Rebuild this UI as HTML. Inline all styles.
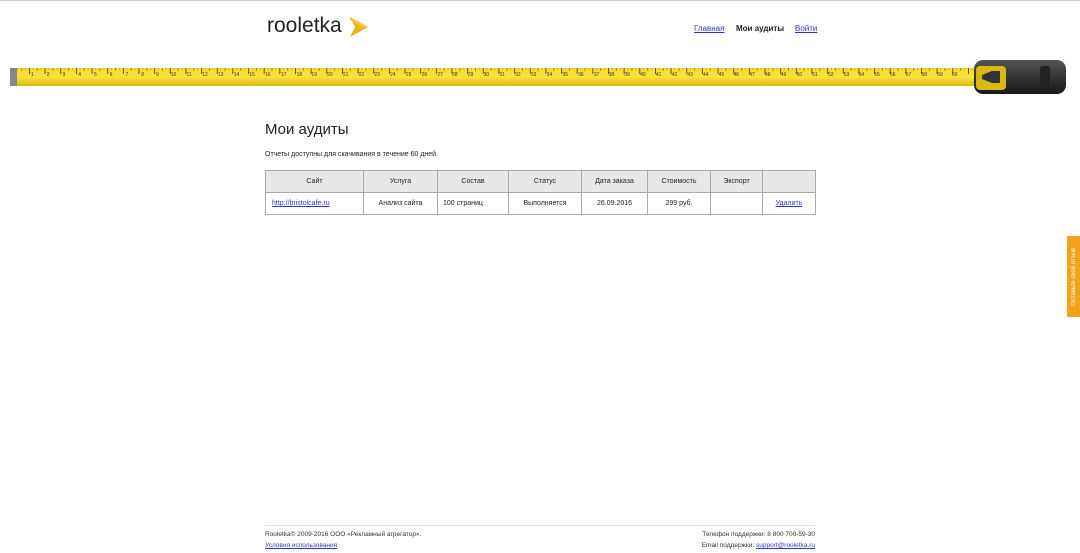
<!DOCTYPE html>
<html><head><meta charset="utf-8"><style>
body{margin:0;width:1080px;height:553px;background:#fff;font-family:"Liberation Sans",sans-serif;position:relative;overflow:hidden;color:#222}
.top{position:absolute;left:0;top:0;width:1080px;height:1px;background:#ccc}
.logo{position:absolute;left:267px;top:14px;font-size:21px;color:#222;letter-spacing:0}
.nav{position:absolute;top:24px;font-size:8px}
a{color:#33c;text-decoration:underline}
h1{position:absolute;left:265px;top:121px;margin:0;font-size:15px;font-weight:normal}
.note{position:absolute;left:265px;top:151px;font-size:7px}
table{position:absolute;left:265px;top:170px;width:551px;border-collapse:collapse;font-size:7px}
td,th{border:1px solid #aaa;text-align:center;font-weight:normal;height:21px;padding:0}
th{background:#e8e8e8}
.foot{position:absolute;left:265px;top:525px;width:550px;border-top:1px solid #ddd;font-size:6.5px;line-height:11px;padding-top:3px;color:#333}
.tab{position:absolute;left:1067px;top:236px;width:13px;height:81px;background:#f2a21b}
.tab span{position:absolute;left:50%;top:50%;transform:translate(-50%,-50%) rotate(-90deg);white-space:nowrap;font-size:6px;color:#fff}
</style></head><body>
<div class="top"></div>
<div class="logo">rooletka<svg width="22" height="22" viewBox="0 0 22 22" style="position:absolute;left:81px;top:2px"><path d="M2 1 L20 11 L2 21 L7 11 Z" fill="#f0b21a"/><path d="M2 1 L20 11 L14 11 L2 4Z" fill="#f7c93a"/></svg></div>
<div class="nav" style="left:694px"><a>Главная</a></div>
<div class="nav" style="left:736px;font-weight:bold">Мои аудиты</div>
<div class="nav" style="left:795px"><a>Войти</a></div>
<svg style="position:absolute;left:0;top:58px" width="1080" height="42">
<defs><linearGradient id="y" x1="0" y1="0" x2="0" y2="1"><stop offset="0" stop-color="#f5dc2c"/><stop offset=".5" stop-color="#f9e33a"/><stop offset="1" stop-color="#d9b812"/></linearGradient>
<pattern id="t" x="29" y="0" width="15.65" height="30" patternUnits="userSpaceOnUse"><rect x="0" y="10" width="0.8" height="6" fill="#333"/><rect x="8" y="10" width="0.6" height="3" fill="#555"/><rect x="4" y="10" width="0.4" height="2" fill="#777"/><rect x="12" y="10" width="0.4" height="2" fill="#777"/></pattern>
<linearGradient id="c" x1="0" y1="0" x2="0" y2="1"><stop offset="0" stop-color="#555"/><stop offset=".5" stop-color="#333"/><stop offset="1" stop-color="#1a1a1a"/></linearGradient></defs>
<rect x="10" y="10" width="970" height="18" fill="url(#y)"/>
<rect x="16" y="10" width="960" height="18" fill="url(#t)"/>
<rect x="10" y="10" width="7" height="18" fill="#888"/>
<g font-size="5" fill="#333" font-family="Liberation Sans" transform="translate(0.5,0) scale(0.984,1)">
<text x="31" y="18">1</text><text x="47" y="18">2</text><text x="63" y="18">3</text><text x="79" y="18">4</text><text x="95" y="18">5</text><text x="111" y="18">6</text><text x="127" y="18">7</text><text x="143" y="18">8</text><text x="158" y="18">9</text><text x="173" y="18">10</text><text x="189" y="18">11</text><text x="205" y="18">12</text><text x="221" y="18">13</text><text x="237" y="18">14</text><text x="253" y="18">15</text><text x="269" y="18">16</text><text x="285" y="18">17</text><text x="301" y="18">18</text><text x="316" y="18">19</text><text x="332" y="18">20</text><text x="348" y="18">21</text><text x="364" y="18">22</text><text x="380" y="18">23</text><text x="396" y="18">24</text><text x="412" y="18">25</text><text x="428" y="18">26</text><text x="444" y="18">27</text><text x="459" y="18">28</text><text x="475" y="18">29</text><text x="491" y="18">30</text><text x="507" y="18">31</text><text x="523" y="18">32</text><text x="539" y="18">33</text><text x="555" y="18">34</text><text x="571" y="18">35</text><text x="587" y="18">36</text><text x="603" y="18">37</text><text x="618" y="18">38</text><text x="634" y="18">39</text><text x="650" y="18">40</text><text x="666" y="18">41</text><text x="682" y="18">42</text><text x="698" y="18">43</text><text x="714" y="18">44</text><text x="730" y="18">45</text><text x="745" y="18">46</text><text x="761" y="18">47</text><text x="777" y="18">48</text><text x="793" y="18">49</text><text x="809" y="18">50</text><text x="825" y="18">51</text><text x="841" y="18">52</text><text x="857" y="18">53</text><text x="872" y="18">54</text><text x="888" y="18">55</text><text x="904" y="18">56</text><text x="920" y="18">57</text><text x="936" y="18">58</text><text x="952" y="18">59</text><text x="967" y="18">60</text></g>
<rect x="974" y="2" width="92" height="34" rx="9" fill="url(#c)"/>
<rect x="976" y="8" width="30" height="24" rx="4" fill="#d9b812"/>
<path d="M982 17 L992 13 L1000 13 L1000 25 L992 25 L982 21Z" fill="#333"/>
<rect x="1040" y="8" width="10" height="22" rx="3" fill="#222"/>
</svg>
<h1>Мои аудиты</h1>
<div class="note">Отчеты доступны для скачивания в течение 60 дней.</div>
<table><tr><th style="width:97px">Сайт</th><th style="width:73px">Услуга</th><th style="width:70px">Состав</th><th style="width:72px">Статус</th><th style="width:65px">Дата заказа</th><th style="width:62px">Стоимость</th><th style="width:51px">Экспорт</th><th></th></tr>
<tr><td style="text-align:left;padding-left:6px"><a>http://bristolcafe.ru</a></td><td>Анализ сайта</td><td style="text-align:left;padding-left:5px">100 страниц</td><td>Выполняется</td><td>26.09.2016</td><td>299 руб.</td><td></td><td><a>Удалить</a></td></tr></table>
<div class="foot"><div style="float:right;text-align:right">Телефон поддержки: 8 800 700-59-30<br>Email поддержки: <a>support@rooletka.ru</a></div>Rooletka© 2009-2016 ООО «Рекламный агрегатор».<br><a>Условия использования</a></div>
<div class="tab"><span>Оставьте свой отзыв</span></div>
</body></html>
